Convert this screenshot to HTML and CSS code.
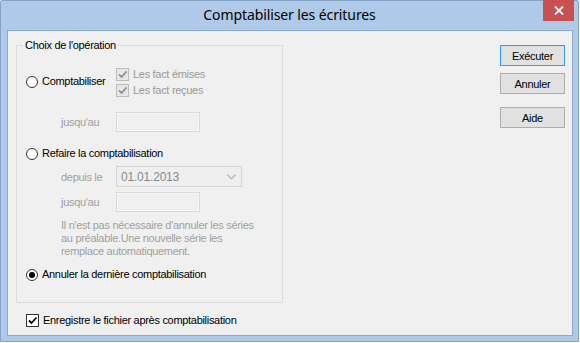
FILE: index.html
```html
<!DOCTYPE html>
<html lang="fr">
<head>
<meta charset="utf-8">
<title>Comptabiliser les écritures</title>
<link rel="stylesheet" href="styles.css">
</head>
<body>
<div class="window">
  <div class="titlebar">
    <span></span>
    <span class="title">Comptabiliser les écritures</span>
    <span class="close"><svg width="10" height="9" viewBox="0 0 10 9"><path d="M1 0.5 L9 8.5 M9 0.5 L1 8.5" stroke="#fff" stroke-width="1.8"/></svg></span>
  </div>
  <div class="client">
    <div class="left">
      <div class="group">
        <div class="legend">Choix de l'opération</div>
        <div class="row-a">
          <div class="opt opt-w"><span class="radio"></span><span>Comptabiliser</span></div>
          <div class="checks">
            <div class="opt dis"><span class="cb cb-dis"><svg width="11" height="11" viewBox="0 0 11 11"><path d="M2 5.5 L4.5 8 L9.5 2.5" fill="none" stroke="#8a8a8a" stroke-width="1.7"/></svg></span><span>Les fact émises</span></div>
            <div class="opt dis"><span class="cb cb-dis"><svg width="11" height="11" viewBox="0 0 11 11"><path d="M2 5.5 L4.5 8 L9.5 2.5" fill="none" stroke="#8a8a8a" stroke-width="1.7"/></svg></span><span>Les fact reçues</span></div>
          </div>
        </div>
        <div class="field f-b"><span class="lbl">jusqu'au</span><span class="tb"></span></div>
        <div class="opt r-c"><span class="radio"></span><span>Refaire la comptabilisation</span></div>
        <div class="field f-d"><span class="lbl">depuis le</span><span class="combo"><span>01.01.2013</span><svg width="9" height="6" viewBox="0 0 9 6"><path d="M0.5 0.8 L4.5 4.8 L8.5 0.8" fill="none" stroke="#b8b8b8" stroke-width="1.5"/></svg></span></div>
        <div class="field f-e"><span class="lbl">jusqu'au</span><span class="tb"></span></div>
        <p class="note">Il n'est pas nécessaire d'annuler les séries<br>au préalable.Une nouvelle série les<br>remplace automatiquement.</p>
        <div class="opt r-f"><span class="radio on"><span class="dot"></span></span><span>Annuler la dernière comptabilisation</span></div>
      </div>
      <div class="opt save"><span class="cb"><svg width="11" height="11" viewBox="0 0 11 11"><path d="M2 5.5 L4.5 8 L9.5 2.5" fill="none" stroke="#000" stroke-width="1.8"/></svg></span><span>Enregistre le fichier après comptabilisation</span></div>
    </div>
    <div class="buttons">
      <button class="btn default">Exécuter</button>
      <button class="btn b2">Annuler</button>
      <button class="btn b3">Aide</button>
    </div>
  </div>
</div>
</body>
</html>
```
FILE: styles.css
```css
* { box-sizing: border-box; }
html, body { margin: 0; padding: 0; background: #fff; }
body { width: 580px; height: 343px; overflow: hidden; }

.window {
  width: 579px;
  height: 342px;
  border: 1px solid #84a2c9;
  border-radius: 2px 2px 0 0;
  background: #aecae8;
  padding: 0 5px 5px 6px;
  display: flex;
  flex-direction: column;
}

.titlebar {
  height: 29px;
  display: grid;
  grid-template-columns: 1fr auto 1fr;
  align-items: start;
  margin: 0 -5px 0 -6px;
}
.title {
  font-family: "Noto Sans", "Open Sans", sans-serif;
  font-size: 14px;
  letter-spacing: -0.1px;
  color: #000;
  padding-top: 4px;
  line-height: 20px;
}
.close {
  justify-self: end;
  margin-right: 4px;
  margin-top: -1px;
  width: 31px;
  height: 21px;
  background: #c75050;
  display: flex;
  align-items: center;
  justify-content: center;
}

.client {
  flex: 1;
  border: 1px solid #8ea9cb;
  background: #f0f0f0;
  display: flex;
  font-family: "Liberation Sans", Arial, sans-serif;
  font-size: 11px;
  letter-spacing: -0.3px;
  color: #000;
}

.left { display: flex; flex-direction: column; }

.group {
  margin: 14px 0 0 8px;
  width: 267px;
  height: 258px;
  border: 1px solid #dcdcdc;
  padding-left: 9px;
  display: flex;
  flex-direction: column;
}
.legend {
  align-self: flex-start;
  margin: -7px 0 0 -3px;
  padding: 0 2px;
  background: #f0f0f0;
  line-height: 13px;
  height: 13px;
}

.opt { display: flex; align-items: center; height: 13px; line-height: 13px; white-space: nowrap; }
.opt .radio, .opt .cb { margin-right: 4px; flex: none; }
.dis { color: #999; }

.radio {
  width: 12px; height: 12px;
  border: 1px solid #333;
  border-radius: 50%;
  background: #fff;
  display: flex; align-items: center; justify-content: center;
}
.dot { width: 6px; height: 6px; border-radius: 50%; background: #000; }

.cb {
  width: 13px; height: 13px;
  border: 1px solid #333;
  background: #fff;
  display: flex; align-items: center; justify-content: center;
}
.cb-dis { border-color: #bcbcbc; background: #e6e6e6; }

.row-a { display: flex; margin-top: 16px; }
.opt-w { width: 90px; margin-top: 7px; }
.checks { display: flex; flex-direction: column; gap: 3px; }

.field { display: flex; align-items: center; padding-left: 35px; }
.lbl { width: 55px; color: #a0a0a0; }
.tb {
  width: 84px; height: 20px;
  border: 1px solid #d9d9d9;
  box-shadow: inset 0 0 0 1px #f7f7f7;
  background: #f0f0f0;
}
.combo {
  width: 126px; height: 21px;
  border: 1px solid #d5d5d5;
  background: #efefef;
  display: flex; align-items: center; justify-content: space-between;
  padding: 0 5px 0 4px;
  color: #858a90;
  font-size: 12px;
  letter-spacing: -0.2px;
}
.f-b { margin-top: 15px; }
.r-c { margin-top: 15px; }
.f-d { margin-top: 6px; }
.f-e { margin-top: 5px; }
.note {
  margin: 7px 0 0 35px;
  line-height: 13px;
  color: #a0a0a0;
}
.r-f { margin-top: 10px; }

.save { margin: 11px 0 0 18px; }

.buttons {
  margin: 14px 0 0 217px;
  display: flex;
  flex-direction: column;
}
.btn {
  width: 65px; height: 21px;
  border: 1px solid #adadad;
  background: #e1e1e1;
  font-family: "Liberation Sans", Arial, sans-serif;
  font-size: 11px;
  letter-spacing: -0.3px;
  color: #000;
  padding: 0;
}
.btn.default { border-color: #3399ff; }
.b2 { margin-top: 7px; }
.b3 { margin-top: 13px; }
```
